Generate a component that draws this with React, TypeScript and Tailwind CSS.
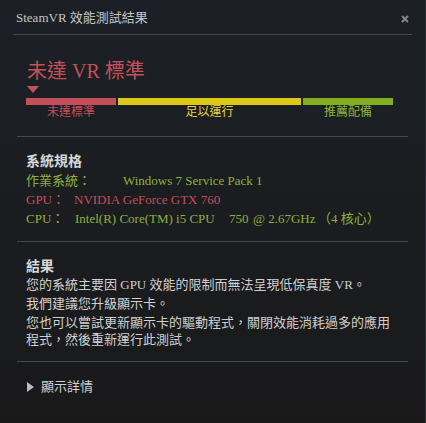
import React from "react";

const FONT = "font-['Liberation_Serif','Noto_Sans_CJK_TC',serif]";

function Divider({ wide = false }: { wide?: boolean }) {
  return <div className={`h-px bg-[#45474a] ${wide ? "mx-[13px]" : "mx-[17px]"}`} />;
}

export default function App() {
  return (
    <div
      className={`relative w-[426px] h-[423px] overflow-hidden bg-gradient-to-b from-[#1c2026] to-[#19191a] border-r border-[#26363d] ${FONT}`}
    >
      {/* header */}
      <div className="flex h-[34px] items-center justify-between pl-[16px] pr-[16px] pt-[2px]">
        <span className="text-[13px] leading-[16px] text-[#c4c4c4]">SteamVR 效能測試結果</span>
        <svg width="8" height="8" viewBox="0 0 8 8" className="mt-[2px]">
          <path d="M1 1L7 7M7 1L1 7" stroke="#85878a" strokeWidth="2" />
        </svg>
      </div>
      <Divider wide />

      {/* rating */}
      <div className="px-[26px] pb-[16px]">
        <div className="mt-[24px] pl-px text-[20px] leading-[24px] text-[#c4505b]">未達 VR 標準</div>
        <svg width="12" height="7" viewBox="0 0 12 7" className="ml-px mt-[3px] block">
          <path d="M0 0H12L6 7Z" fill="#c4505b" />
        </svg>
        <div className="mt-[5px] flex gap-[2px]">
          <div className="flex w-[90px] flex-col">
            <div className="h-[7px] bg-[#c44f5b]" />
            <div className="text-center text-[12px] leading-[15px] text-[#c4505b]">未達標準</div>
          </div>
          <div className="flex w-[183px] flex-col">
            <div className="h-[7px] bg-[#dcc816]" />
            <div className="text-center text-[12px] leading-[15px] text-[#e6d34a]">足以運行</div>
          </div>
          <div className="flex w-[90px] flex-col">
            <div className="h-[7px] bg-[#83ad20]" />
            <div className="text-center text-[12px] leading-[15px] text-[#8db43a]">推薦配備</div>
          </div>
        </div>
      </div>
      <Divider />

      {/* specs */}
      <div className="px-[26px] pt-[15px] pb-[13px] text-[13px] leading-[19px]">
        <div className="text-[14px] font-bold text-[#d6d6d6]">系統規格</div>
        <div className="flex text-[#8db03c]">
          <span className="w-[97px] shrink-0">作業系統：</span>
          <span>Windows 7 Service Pack 1</span>
        </div>
        <div className="flex text-[#c0515b]">
          <span className="w-[48px] shrink-0">GPU：</span>
          <span>NVIDIA GeForce GTX 760</span>
        </div>
        <div className="flex whitespace-nowrap text-[#8db03c]">
          <span className="w-[49px] shrink-0">CPU：</span>
          <span className="w-[154px] shrink-0">Intel(R) Core(TM) i5 CPU</span>
          <span className="w-[24px] shrink-0">750</span>
          <span className="w-[65px] shrink-0">@ 2.67GHz</span>
          <span>（4 核心）</span>
        </div>
      </div>
      <Divider />

      {/* result */}
      <div className="px-[26px] pt-[15px] pb-[13px] text-[13px] text-[#d0d0d0]">
        <div className="text-[14px] font-bold leading-[19px] text-[#d8d8d8]">結果</div>
        <p className="leading-[17px]">您的系統主要因 GPU 效能的限制而無法呈現低保真度 VR。</p>
        <p className="mt-[2px] leading-[17px]">我們建議您升級顯示卡。</p>
        <p className="mt-[2px] w-[372px] leading-[17px]">
          您也可以嘗試更新顯示卡的驅動程式，關閉效能消耗過多的應用程式，然後重新運行此測試。
        </p>
      </div>
      <Divider />

      {/* details */}
      <div className="flex items-center gap-[7px] px-[27px] pt-[16px] text-[13px] leading-[17px] text-[#d2d2d2]">
        <svg width="7" height="10" viewBox="0 0 7 10">
          <path d="M0 0L7 5L0 10Z" fill="#bdbdbd" />
        </svg>
        <span>顯示詳情</span>
      </div>
    </div>
  );
}
